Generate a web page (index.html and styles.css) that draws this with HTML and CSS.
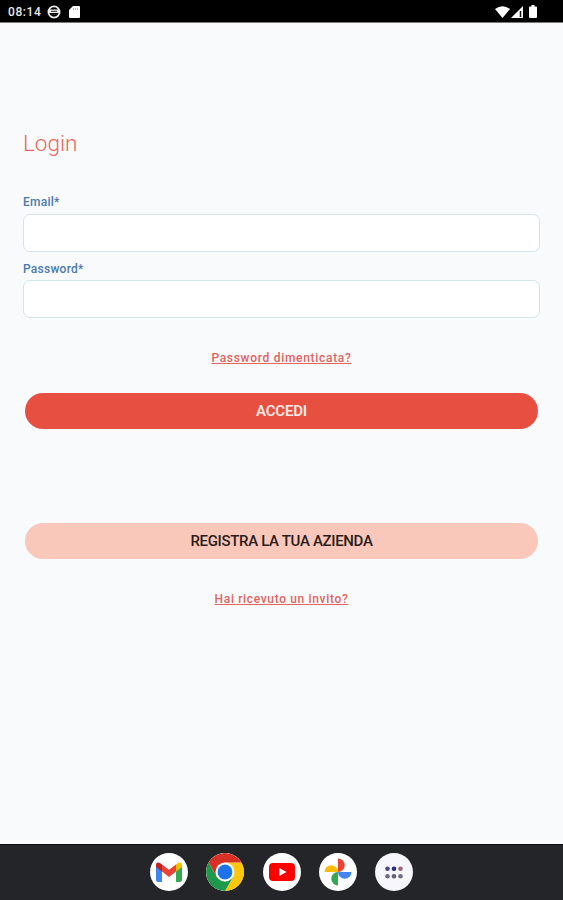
FILE: index.html
```
<!DOCTYPE html>
<html lang="it">

<head>
    <meta charset="UTF-8">
    <meta name="viewport" content="width=device-width, initial-scale=1.0">
    <title>Login</title>
    <link rel="stylesheet" href="styles.css">
</head>

<body>
    <!-- status bar -->
    <div class="status-bar">
        <span class="clock">08:14</span>
        <svg width="14" height="14" viewBox="0 0 14 14">
            <circle cx="7" cy="7" r="5.6" fill="none" stroke="#eee" stroke-width="1.8" />
            <path d="M2 4.500h10v3.500H2z" fill="#eee" />
            <path d="M4 6.300h6M4 9.500h6" stroke="#222" stroke-width="1" />
        </svg>
        <svg class="icon-card" width="11" height="12" viewBox="0 0 11 12">
            <path d="M4 0h6q1 0 1 1v10q0 1-1 1H1q-1 0-1-1V4z" fill="#fff" />
            <path d="M4.5 2v2M6.5 2v2M8.5 2v2" stroke="#aaa" stroke-width=".8" />
        </svg>
        <div class="status-right">
            <svg width="15" height="12" viewBox="0 0 15 12">
                <path d="M0 3Q7.500-2.500 15 3L7.500 12z" fill="#fff" />
            </svg>
            <svg width="12" height="12" viewBox="0 0 12 12">
                <path d="M12 0v12H0z" fill="#fff" />
                <path d="M9.500 5v6" stroke="#111" stroke-width="1.500" />
            </svg>
            <svg class="icon-battery" width="8" height="13" viewBox="0 0 8 13">
                <path d="M2.500 0h3v1.500H7q1 0 1 1V12q0 1-1 1H1q-1 0-1-1V2.500q0-1 1-1h1.500z" fill="#fff" />
            </svg>
        </div>
    </div>

    <form class="login">
        <h1>Login</h1>

        <label for="email">Email*</label>
        <input type="email" id="email">
        <label for="password">Password*</label>
        <input type="password" id="password">

        <a class="link forgot" href="#">Password dimenticata?</a>
        <button type="button" class="btn primary">ACCEDI</button>
        <button type="button" class="btn secondary">REGISTRA LA TUA AZIENDA</button>
        <a class="link invite" href="#">Hai ricevuto un invito?</a>
    </form>

    <!-- dock -->
    <div class="dock">
        <div class="app">
            <svg width="26" height="20" viewBox="0 0 26 20">
                <path d="M0 4l6 4.500V20H2q-2 0-2-2z" fill="#4285f4" />
                <path d="M26 4l-6 4.500V20h4q2 0 2-2z" fill="#34a853" />
                <path d="M20 2.500l2-1.500q4-2 4 2.500V5l-6 4.500z" fill="#fbbc04" />
                <path d="M6 2.500l7 5.300L20 2.500v7L13 15 6 9.500z" fill="#ea4335" />
                <path d="M0 3.500Q0-1 4 1l2 1.500v7L0 5z" fill="#c5221f" />
            </svg>
        </div>
        <div class="app">
            <svg width="38" height="38" viewBox="0 0 38 38">
                <path d="M19 9.500H35.450A19 19 0 0 1 19 38L27.200 23.700z" fill="#fdc60a" />
                <path d="M2.550 9.500L10.800 23.700 19 28.500 27.200 23.700 19 38A19 19 0 0 1 2.550 9.500z" fill="#1e9849" />
                <path d="M19 19L10.800 23.700 2.550 9.500A19 19 0 0 1 35.450 9.500H19z" fill="#d93025" />
                <circle cx="19" cy="19" r="9.500" fill="#fff" />
                <circle cx="19" cy="19" r="7.400" fill="#1a73e8" />
            </svg>
        </div>
        <div class="app">
            <svg width="26" height="18" viewBox="0 0 26 18">
                <rect width="26" height="18" rx="4" fill="#f00" />
                <path d="M10.300 5v8L17.500 9z" fill="#fff" />
            </svg>
        </div>
        <div class="app">
            <svg width="28" height="28" viewBox="0 0 28 28">
                <path d="M14 14V0.500a6.750 6.750 0 0 1 0 13.500z" fill="#ea4335" />
                <path d="M14 14h13.500a6.750 6.750 0 0 1-13.500 0z" fill="#4285f4" />
                <path d="M14 14v13.500a6.750 6.750 0 0 1 0-13.500z" fill="#34a853" />
                <path d="M14 14H0.500a6.750 6.750 0 0 1 13.500 0z" fill="#fbbc04" />
            </svg>
        </div>
        <div class="app all-apps">
            <svg width="18" height="13" viewBox="0 0 18 13">
                <circle cx="2.500" cy="2.700" r="2.300" fill="#484b86" />
                <circle cx="9" cy="2.700" r="2.300" fill="#282b8c" />
                <circle cx="15.500" cy="2.700" r="2.300" fill="#95677c" />
                <circle cx="2.500" cy="10.300" r="2.300" fill="#706b82" />
                <circle cx="9" cy="10.300" r="2.300" fill="#64617c" />
                <circle cx="15.500" cy="10.300" r="2.300" fill="#706e86" />
            </svg>
        </div>
    </div>
</body>

</html>
```
FILE: styles.css
```
* {
    box-sizing: border-box;
}

body {
    margin: 0;
    height: 900px;
    display: flex;
    flex-direction: column;
    background: #f8fafc;
    font-family: Roboto, "Liberation Sans", sans-serif;
    overflow: hidden;
}

svg {
    display: block;
}

.status-bar {
    height: 23px;
    padding: 1px 26px 0 8px;
    display: flex;
    align-items: center;
    background: #000;
    border-bottom: 1px solid #777;
    color: #e8e8e8;
}

.clock {
    width: 39px;
    font-size: 12px;
    font-weight: 500;
    letter-spacing: 0.6px;
}

.icon-card {
    margin-left: 8px;
}

.status-right {
    display: flex;
    align-items: center;
    gap: 1px;
    margin-left: auto;
}

.icon-battery {
    margin-left: 5px;
}

.login {
    flex: 1;
    display: flex;
    flex-direction: column;
    padding: 106px 23px 0;
}

h1 {
    margin: 0 0 37px;
    height: 28px;
    line-height: 28px;
    font-size: 22.5px;
    font-weight: 300;
    color: #e8675c;
}

label {
    height: 19.5px;
    line-height: 16px;
    font-size: 12px;
    font-weight: 500;
    letter-spacing: 0.25px;
    color: #4b7baa;
}

input {
    height: 38px;
    margin: 0 0 9px;
    padding: 0 12px;
    border: 1px solid #d5e4e9;
    border-radius: 7px;
    background: #fff;
    font: inherit;
}

.link {
    align-self: center;
    height: 16px;
    line-height: 16px;
    font-size: 12px;
    font-weight: 500;
    color: #e0645f;
    text-underline-offset: 1px;
}

.forgot {
    margin-top: 23px;
    letter-spacing: 0.7px;
}

.btn {
    height: 36px;
    margin: 0 2px;
    padding: 0;
    border: none;
    border-radius: 18px;
    font-family: inherit;
    font-size: 15px;
    font-weight: 500;
    cursor: pointer;
}

.primary {
    margin-top: 26.5px;
    background: #e75040;
    color: #fde9e5;
    font-weight: 600;
    letter-spacing: -0.2px;
}

.secondary {
    margin-top: 94.5px;
    background: #f9c8bb;
    color: #2b1b19;
    letter-spacing: -0.33px;
}

.invite {
    margin-top: 32px;
    letter-spacing: 0.65px;
}

.dock {
    height: 56px;
    padding-bottom: 1px;
    display: flex;
    justify-content: center;
    align-items: center;
    gap: 18.3px;
    background: #242529;
    border-top: 1px solid #0c0c0e;
}

.app {
    width: 38px;
    height: 38px;
    display: flex;
    justify-content: center;
    align-items: center;
    border-radius: 50%;
    background: #fff;
    overflow: hidden;
}

.all-apps {
    background: #f8f6fd;
}
```
